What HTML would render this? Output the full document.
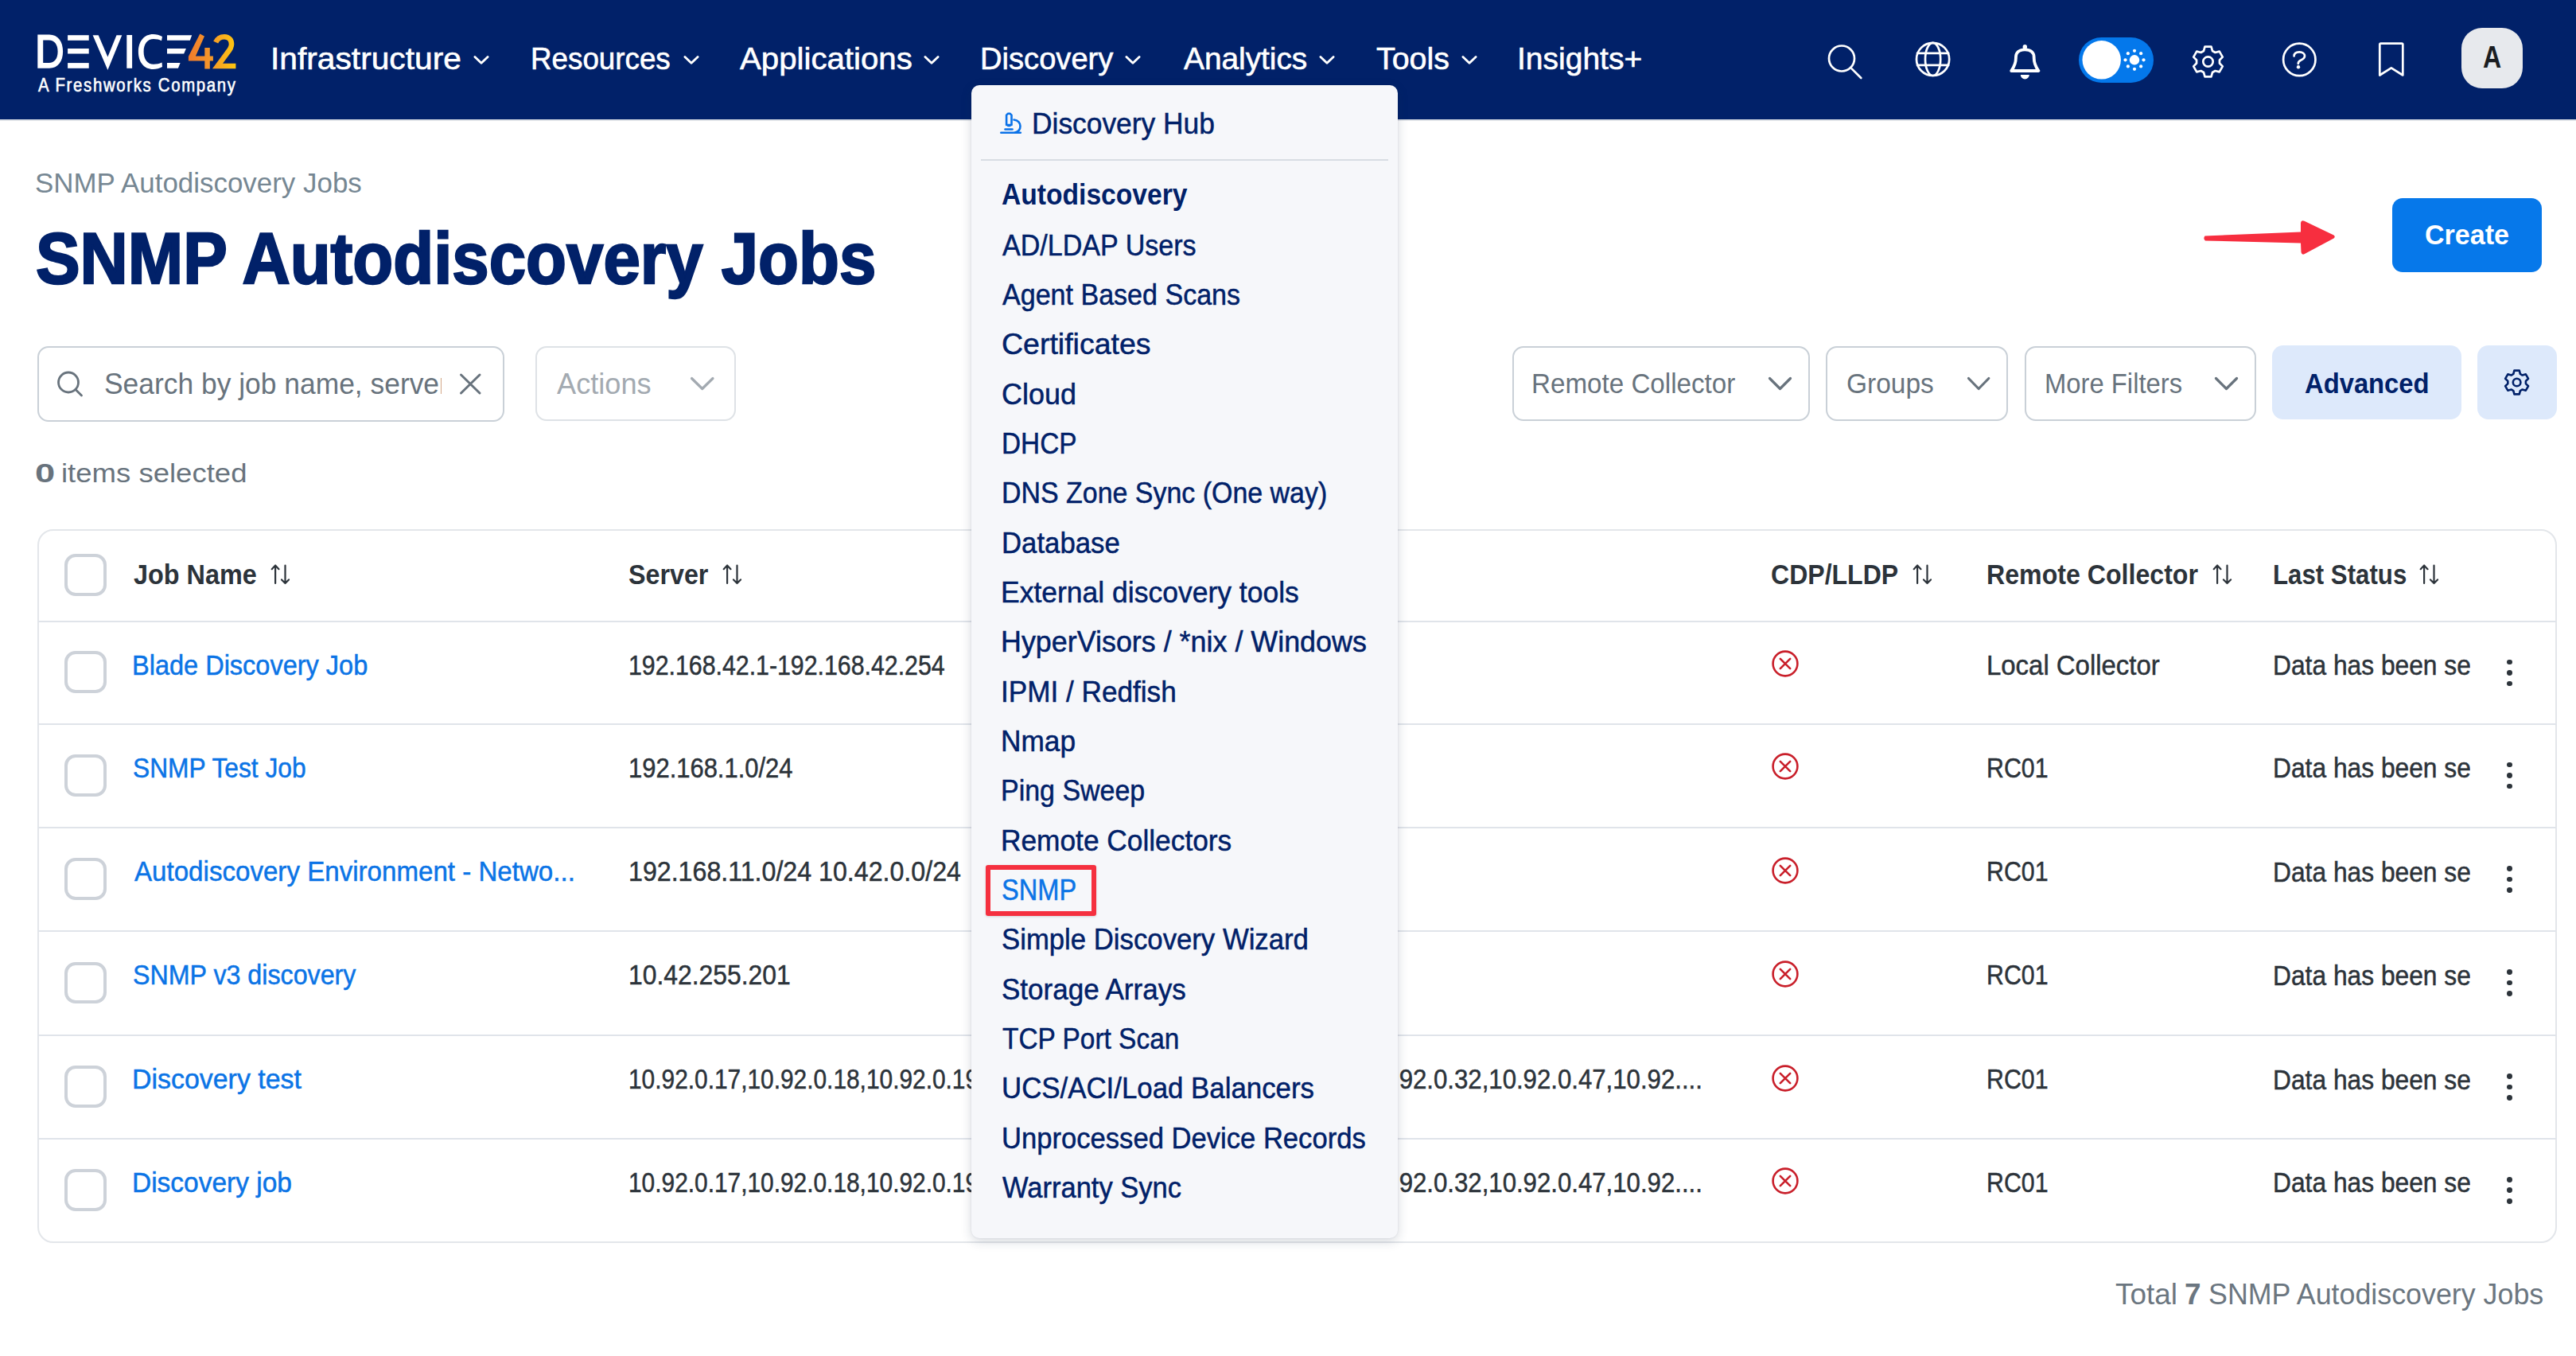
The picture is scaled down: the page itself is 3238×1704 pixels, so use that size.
<!DOCTYPE html>
<html><head><meta charset="utf-8"><style>
html,body{margin:0;padding:0;width:3238px;height:1704px;overflow:hidden;background:#fff;position:relative}
body{font-family:"Liberation Sans",sans-serif}
.t{position:absolute;line-height:0;white-space:nowrap;transform-origin:0 0}
svg{overflow:visible}
</style></head><body>
<div style="position:absolute;left:0px;top:0px;width:3238px;height:150px;background:#012169"></div>
<div style="position:absolute;left:0px;top:150px;width:3238px;height:2px;background:#e0e3e8"></div>
<svg style="position:absolute;left:0;top:0" width="320" height="130" viewBox="0 0 320 130">
<defs><linearGradient id="lg" x1="236" y1="0" x2="297" y2="0" gradientUnits="userSpaceOnUse"><stop offset="0" stop-color="#f07a2b"/><stop offset="0.45" stop-color="#f5962a"/><stop offset="1" stop-color="#fdc70f"/></linearGradient></defs>
<g fill="#fff">
<path fill-rule="evenodd" d="M47.3,43.4 H62 C73,43.4 79.1,52 79.1,64.6 C79.1,77.2 73,85.8 62,85.8 H47.3 Z M54.2,50.5 V79 H61.5 C68.5,79 72.6,73.5 72.6,64.7 C72.6,56 68.5,50.5 61.5,50.5 Z"/>
<rect x="85.1" y="44.2" width="26.6" height="6.6"/><rect x="85.1" y="61" width="26.6" height="6.5"/><rect x="85.1" y="79.1" width="26.6" height="6.7"/>
<path d="M116.6,44.2 H123.7 L135.4,71.4 L146.5,44.2 H153.3 L135.4,88 Z"/>
<rect x="159.3" y="44" width="6.8" height="41.8"/>
<path d="M204,46 C200.5,43.8 196.5,42.9 192.5,42.9 C181,42.9 173.9,52 173.9,64.9 C173.9,77.8 181,86.9 192.5,86.9 C196.5,86.9 200.5,86 204,84 L203.5,78.5 C200.5,80 197,80.7 193,80.7 C185.5,80.7 180.6,74.5 180.6,64.9 C180.6,55.3 185.5,49.1 193,49.1 C197,49.1 200.5,49.8 203,51.2 Z"/>
<path d="M210,44.2 H241.2 L238.8,50.8 H210 Z"/><path d="M210,61 H233.9 L231.2,67.5 H210 Z"/><path d="M210,79.1 H226.6 L223.9,85.8 H210 Z"/>
</g>
<path fill="url(#lg)" d="M251.3,42.6 L257,45.6 L245.9,70.6 H257.3 V60 H263.8 V70.6 H267.9 V76.6 H263.8 V86.6 H257.3 V76.6 H236.9 V71 Z"/>
<path fill="none" stroke="url(#lg)" stroke-width="6.6" d="M271.2,53.2 C273.5,48 277.5,46.2 282,46.2 C288,46.2 291,50.5 291,55.5 C291,59.5 289,62.5 286,66 L273.5,83 H296.4"/>
</svg>
<div class="t" style="left:48.00px;top:107px;font-size:23.69px;color:#fff;transform:scaleX(0.8600);-webkit-text-stroke:0.6px #fff;letter-spacing:1.941px;">A Freshworks Company</div>
<div class="t" style="left:339.63px;top:74px;font-size:38.37px;color:#fff;transform:scaleX(1.0614);-webkit-text-stroke:0.6px #fff;">Infrastructure</div>
<svg style="position:absolute;left:593.5px;top:68px" width="23" height="16" viewBox="0 0 23 16"><path d="M2.9,3.5 L11,11.3 L19.1,3.5" fill="none" stroke="#fff" stroke-width="2.9" stroke-linecap="round" stroke-linejoin="round"/></svg>
<div class="t" style="left:666.96px;top:74px;font-size:38.37px;color:#fff;transform:scaleX(0.9586);-webkit-text-stroke:0.6px #fff;">Resources</div>
<svg style="position:absolute;left:857.5px;top:68px" width="23" height="16" viewBox="0 0 23 16"><path d="M2.9,3.5 L11,11.3 L19.1,3.5" fill="none" stroke="#fff" stroke-width="2.9" stroke-linecap="round" stroke-linejoin="round"/></svg>
<div class="t" style="left:930.30px;top:74px;font-size:38.37px;color:#fff;transform:scaleX(1.0482);-webkit-text-stroke:0.6px #fff;">Applications</div>
<svg style="position:absolute;left:1160.1px;top:68px" width="23" height="16" viewBox="0 0 23 16"><path d="M2.9,3.5 L11,11.3 L19.1,3.5" fill="none" stroke="#fff" stroke-width="2.9" stroke-linecap="round" stroke-linejoin="round"/></svg>
<div class="t" style="left:1232.25px;top:74px;font-size:38.37px;color:#fff;transform:scaleX(0.9940);-webkit-text-stroke:0.6px #fff;">Discovery</div>
<svg style="position:absolute;left:1413.2px;top:68px" width="23" height="16" viewBox="0 0 23 16"><path d="M2.9,3.5 L11,11.3 L19.1,3.5" fill="none" stroke="#fff" stroke-width="2.9" stroke-linecap="round" stroke-linejoin="round"/></svg>
<div class="t" style="left:1487.80px;top:74px;font-size:38.37px;color:#fff;transform:scaleX(1.0115);-webkit-text-stroke:0.6px #fff;">Analytics</div>
<svg style="position:absolute;left:1656.8px;top:68px" width="23" height="16" viewBox="0 0 23 16"><path d="M2.9,3.5 L11,11.3 L19.1,3.5" fill="none" stroke="#fff" stroke-width="2.9" stroke-linecap="round" stroke-linejoin="round"/></svg>
<div class="t" style="left:1729.71px;top:74px;font-size:38.37px;color:#fff;transform:scaleX(1.0264);-webkit-text-stroke:0.6px #fff;">Tools</div>
<svg style="position:absolute;left:1835.6px;top:68px" width="23" height="16" viewBox="0 0 23 16"><path d="M2.9,3.5 L11,11.3 L19.1,3.5" fill="none" stroke="#fff" stroke-width="2.9" stroke-linecap="round" stroke-linejoin="round"/></svg>
<div class="t" style="left:1907.39px;top:74px;font-size:38.37px;color:#fff;transform:scaleX(1.0169);-webkit-text-stroke:0.6px #fff;">Insights+</div>
<svg style="position:absolute;left:2280px;top:40px" width="920" height="80" viewBox="2280 40 920 80">
<g fill="none" stroke="#fff" stroke-width="2.7" stroke-linecap="round" stroke-linejoin="round">
<circle cx="2315" cy="73.5" r="16"/><path d="M2327.6,86.4 L2339.3,98"/>
<circle cx="2429.6" cy="74.4" r="20.6"/><ellipse cx="2429.6" cy="74.4" rx="9.6" ry="20.6"/><path d="M2410,66.9 H2449.2 M2410,81.9 H2449.2"/>
<path stroke-width="3.8" d="M2528.2,89 C2531,85 2533.9,81 2533.9,73 L2533.9,72 C2533.9,65.5 2538.6,62.4 2545.3,62.4 C2552,62.4 2556.7,65.5 2556.7,72 L2556.7,73 C2556.7,81 2559.6,85 2562.4,89 Z"/>
<circle cx="2890.3" cy="74.9" r="20.2"/>
<path d="M2883.6,70.5 C2883.6,66.8 2886.6,65.3 2890.3,65.3 C2894.3,65.3 2897,67.6 2897,70.3 C2897,73.6 2894,74.8 2891.5,76 C2889.6,77 2888.8,78 2888.8,80"/>
<path d="M2991.3,56 Q2991.3,54.7 2992.6,54.7 H3019 Q3020.3,54.7 3020.3,56 V94.5 L3005.8,85.3 L2991.3,94.5 Z"/>
</g>
<g fill="#fff"><rect x="2542.6" y="56" width="5.4" height="6" rx="2.7"/><path d="M2539.8,93.9 H2550.8 A5.5,5.5 0 0 1 2539.8,93.9 Z"/><circle cx="2889" cy="84.3" r="2.2"/></g>
</svg>
<svg style="position:absolute;left:0;top:0" width="3238" height="150"><path d="M2770.03,63.96 L2771.51,58.72 L2779.49,58.72 L2780.97,63.96 L2784.49,66.00 L2789.77,64.65 L2793.76,71.57 L2789.96,75.47 L2789.96,79.53 L2793.76,83.43 L2789.77,90.35 L2784.49,89.00 L2780.97,91.04 L2779.49,96.28 L2771.51,96.28 L2770.03,91.04 L2766.51,89.00 L2761.23,90.35 L2757.24,83.43 L2761.04,79.53 L2761.04,75.47 L2757.24,71.57 L2761.23,64.65 L2766.51,66.00 Z" fill="none" stroke="#fff" stroke-width="2.7" stroke-linejoin="round"/><circle cx="2775.5" cy="77.5" r="6.2" fill="none" stroke="#fff" stroke-width="2.7"/></svg>
<div style="position:absolute;left:2613px;top:47.2px;width:94px;height:56.6px;background:#0478eb;border-radius:28.3px"></div>
<svg style="position:absolute;left:2600px;top:40px" width="120" height="70" viewBox="2600 40 120 70"><circle cx="2641.7" cy="75.3" r="24.2" fill="#fff"/>
<g fill="#fff"><circle cx="2683" cy="75.3" r="6.2"/><circle cx="2694.50" cy="75.30" r="2.1"/><circle cx="2691.13" cy="83.43" r="2.1"/><circle cx="2683.00" cy="86.80" r="2.1"/><circle cx="2674.87" cy="83.43" r="2.1"/><circle cx="2671.50" cy="75.30" r="2.1"/><circle cx="2674.87" cy="67.17" r="2.1"/><circle cx="2683.00" cy="63.80" r="2.1"/><circle cx="2691.13" cy="67.17" r="2.1"/></g></svg>
<div style="position:absolute;left:3093.7px;top:35px;width:77.3px;height:75.8px;background:#e7e9ed;border-radius:26px"></div>
<div class="t" style="left:3120.70px;top:71px;font-size:39.54px;color:#1b1d21;font-weight:700;transform:scaleX(0.8117);">A</div>
<div class="t" style="left:44.43px;top:230px;font-size:35.61px;color:#768793;transform:scaleX(0.9805);">SNMP Autodiscovery Jobs</div>
<div class="t" style="left:44.70px;top:325px;font-size:90.26px;color:#012169;font-weight:700;transform:scaleX(0.9238);-webkit-text-stroke:2.4px #012169;">SNMP Autodiscovery Jobs</div>
<div style="position:absolute;left:3007px;top:249px;width:187.7px;height:92.7px;background:#0678ea;border-radius:13px"></div>
<div class="t" style="left:3047.94px;top:295px;font-size:35.90px;color:#fff;font-weight:700;transform:scaleX(0.9490);">Create</div>
<svg style="position:absolute;left:2760px;top:265px" width="190" height="70" viewBox="2760 265 190 70" style="overflow:visible"><path d="M2771.5,296.5 Q2769,300 2772,302.5 L2892,305.5 L2892.5,317 Q2893.5,321 2897,319 L2933.5,299.5 Q2936,297.3 2933.5,295.5 L2896.5,277.8 Q2892.5,276 2892,280 L2892,291.5 Z" fill="#f72e3f"/></svg>
<div style="position:absolute;left:46.8px;top:435px;width:587px;height:95px;box-sizing:border-box;border:2px solid #c9d0d7;border-radius:14px;background:#fff"></div>
<svg style="position:absolute;left:60px;top:455px" width="60" height="55" viewBox="60 455 60 55"><g fill="none" stroke="#68737d" stroke-width="2.8" stroke-linecap="round"><circle cx="86" cy="480.5" r="12.5"/><path d="M95.5,490 L102.5,497"/></g></svg>
<div style="position:absolute;left:120px;top:440px;width:435px;height:80px;overflow:hidden">
<div class="t" style="left:11.41px;top:43px;font-size:36.34px;color:#68737d;transform:scaleX(0.9744)">Search by job name, server</div></div>
<svg style="position:absolute;left:570px;top:462px" width="42" height="40" viewBox="570 462 42 40"><path d="M579.5,471 L603,494 M603,471 L579.5,494" stroke="#68737d" stroke-width="3" stroke-linecap="round" fill="none"/></svg>
<div style="position:absolute;left:673px;top:435px;width:251.6px;height:94px;box-sizing:border-box;border:2px solid #dee2e6;border-radius:14px;background:#fff"></div>
<div class="t" style="left:700.00px;top:483px;font-size:36.34px;color:#a3aab1;transform:scaleX(0.9965);">Actions</div>
<svg style="position:absolute;left:863.5px;top:469.6px" width="37.5" height="24.0" viewBox="863.5 469.6 37.5 24.0"><path d="M869.0,475.1 L882.25,488.1 L895.5,475.1" fill="none" stroke="#a3aab1" stroke-width="3.2" stroke-linecap="round" stroke-linejoin="round"/></svg>
<div style="position:absolute;left:1900.6px;top:434.5px;width:374.5999999999999px;height:94px;box-sizing:border-box;border:2px solid #c9d0d7;border-radius:14px;background:#fff"></div>
<div class="t" style="left:1925.35px;top:482px;font-size:35.61px;color:#68737d;transform:scaleX(0.9317);">Remote Collector</div>
<svg style="position:absolute;left:2219px;top:470px" width="37" height="24" viewBox="2219 470 37 24"><path d="M2224.5,475.5 L2237.5,488.5 L2250.5,475.5" fill="none" stroke="#68737d" stroke-width="3.2" stroke-linecap="round" stroke-linejoin="round"/></svg>
<div style="position:absolute;left:2295px;top:434.5px;width:229px;height:94px;box-sizing:border-box;border:2px solid #c9d0d7;border-radius:14px;background:#fff"></div>
<div class="t" style="left:2321.33px;top:482px;font-size:35.61px;color:#68737d;transform:scaleX(0.9404);">Groups</div>
<svg style="position:absolute;left:2468.7px;top:470px" width="36.30000000000018" height="24" viewBox="2468.7 470 36.30000000000018 24"><path d="M2474.2,475.5 L2486.85,488.5 L2499.5,475.5" fill="none" stroke="#68737d" stroke-width="3.2" stroke-linecap="round" stroke-linejoin="round"/></svg>
<div style="position:absolute;left:2544.6px;top:434.5px;width:291.9000000000001px;height:94px;box-sizing:border-box;border:2px solid #c9d0d7;border-radius:14px;background:#fff"></div>
<div class="t" style="left:2569.98px;top:482px;font-size:35.61px;color:#68737d;transform:scaleX(0.9210);">More Filters</div>
<svg style="position:absolute;left:2780px;top:470px" width="37" height="24" viewBox="2780 470 37 24"><path d="M2785.5,475.5 L2798.5,488.5 L2811.5,475.5" fill="none" stroke="#68737d" stroke-width="3.2" stroke-linecap="round" stroke-linejoin="round"/></svg>
<div style="position:absolute;left:2856px;top:434.3px;width:238px;height:93px;background:#dde9fb;border-radius:14px"></div>
<div class="t" style="left:2897.18px;top:482px;font-size:35.90px;color:#012169;font-weight:700;transform:scaleX(0.9128);">Advanced</div>
<div style="position:absolute;left:3114px;top:434.3px;width:100px;height:93px;background:#dde9fb;border-radius:14px"></div>
<svg style="position:absolute;left:3130px;top:445px" width="70" height="70" viewBox="3130 445 70 70"><path d="M3159.33,469.93 L3160.44,465.63 L3166.76,465.63 L3167.87,469.93 L3170.62,471.52 L3174.90,470.33 L3178.06,475.80 L3174.89,478.91 L3174.89,482.09 L3178.06,485.20 L3174.90,490.67 L3170.62,489.48 L3167.87,491.07 L3166.76,495.37 L3160.44,495.37 L3159.33,491.07 L3156.58,489.48 L3152.30,490.67 L3149.14,485.20 L3152.31,482.09 L3152.31,478.91 L3149.14,475.80 L3152.30,470.33 L3156.58,471.52 Z" fill="none" stroke="#012169" stroke-width="2.6" stroke-linejoin="round"/><circle cx="3163.6" cy="480.5" r="4.8" fill="none" stroke="#012169" stroke-width="2.6"/></svg>
<div class="t" style="left:44.19px;top:595px;font-size:33.43px;color:#68737d;font-weight:700;transform:scaleX(1.3539);">0</div>
<div class="t" style="left:76.93px;top:595px;font-size:33.43px;color:#68737d;transform:scaleX(1.0928);">items selected</div>
<div style="position:absolute;left:47px;top:665px;width:3167px;height:896.5px;box-sizing:border-box;border:2px solid #e3e6ea;border-radius:20px;background:#fff"></div>
<div style="position:absolute;left:48px;top:779.6px;width:3165px;height:2px;background:#e0e4ea"></div>
<div style="position:absolute;left:48px;top:908.6px;width:3165px;height:2px;background:#e0e4ea"></div>
<div style="position:absolute;left:48px;top:1039.2px;width:3165px;height:2px;background:#e0e4ea"></div>
<div style="position:absolute;left:48px;top:1169.1000000000001px;width:3165px;height:2px;background:#e0e4ea"></div>
<div style="position:absolute;left:48px;top:1300.1000000000001px;width:3165px;height:2px;background:#e0e4ea"></div>
<div style="position:absolute;left:48px;top:1429.8000000000002px;width:3165px;height:2px;background:#e0e4ea"></div>
<div style="position:absolute;left:81.1px;top:696.1px;width:52.7px;height:52.6px;box-sizing:border-box;border:4px solid #cdd2d9;border-radius:14px;background:#fff"></div>
<div class="t" style="left:168.01px;top:722px;font-size:34.88px;color:#2c333a;font-weight:700;transform:scaleX(0.9291);">Job Name</div>
<svg style="position:absolute;left:338.6px;top:706px" width="26" height="32" viewBox="338.6 706 26 32"><g fill="none" stroke="#2c333a" stroke-width="2.2" stroke-linecap="round" stroke-linejoin="round"><path d="M345.70000000000005,733 V710.6 M341.3,715.2 L345.70000000000005,710.6 L350.1,715.2"/><path d="M358.1,710.6 V733 M353.6,728.4 L358.1,733 L362.6,728.4"/></g></svg>
<div class="t" style="left:790.33px;top:722px;font-size:34.88px;color:#2c333a;font-weight:700;transform:scaleX(0.9244);">Server</div>
<svg style="position:absolute;left:907px;top:706px" width="26" height="32" viewBox="907 706 26 32"><g fill="none" stroke="#2c333a" stroke-width="2.2" stroke-linecap="round" stroke-linejoin="round"><path d="M914.1,733 V710.6 M909.7,715.2 L914.1,710.6 L918.5,715.2"/><path d="M926.5,710.6 V733 M922,728.4 L926.5,733 L931,728.4"/></g></svg>
<div class="t" style="left:2225.72px;top:722px;font-size:34.88px;color:#2c333a;font-weight:700;transform:scaleX(0.9187);">CDP/LLDP</div>
<svg style="position:absolute;left:2403px;top:706px" width="26" height="32" viewBox="2403 706 26 32"><g fill="none" stroke="#2c333a" stroke-width="2.2" stroke-linecap="round" stroke-linejoin="round"><path d="M2410.1,733 V710.6 M2405.7,715.2 L2410.1,710.6 L2414.5,715.2"/><path d="M2422.5,710.6 V733 M2418,728.4 L2422.5,733 L2427,728.4"/></g></svg>
<div class="t" style="left:2497.41px;top:722px;font-size:34.88px;color:#2c333a;font-weight:700;transform:scaleX(0.9212);">Remote Collector</div>
<svg style="position:absolute;left:2779.6px;top:706px" width="26" height="32" viewBox="2779.6 706 26 32"><g fill="none" stroke="#2c333a" stroke-width="2.2" stroke-linecap="round" stroke-linejoin="round"><path d="M2786.7,733 V710.6 M2782.2999999999997,715.2 L2786.7,710.6 L2791.1,715.2"/><path d="M2799.1,710.6 V733 M2794.6,728.4 L2799.1,733 L2803.6,728.4"/></g></svg>
<div class="t" style="left:2856.77px;top:722px;font-size:34.88px;color:#2c333a;font-weight:700;transform:scaleX(0.8950);">Last Status</div>
<svg style="position:absolute;left:3040.4px;top:706px" width="26" height="32" viewBox="3040.4 706 26 32"><g fill="none" stroke="#2c333a" stroke-width="2.2" stroke-linecap="round" stroke-linejoin="round"><path d="M3047.5,733 V710.6 M3043.1,715.2 L3047.5,710.6 L3051.9,715.2"/><path d="M3059.9,710.6 V733 M3055.4,728.4 L3059.9,733 L3064.4,728.4"/></g></svg>
<div style="position:absolute;left:81.1px;top:818.4000000000001px;width:52.7px;height:52.6px;box-sizing:border-box;border:4px solid #cdd2d9;border-radius:14px;background:#fff"></div>
<div class="t" style="left:165.90px;top:836px;font-size:34.59px;color:#0b74e6;transform:scaleX(0.9400);-webkit-text-stroke:0.5px #0b74e6">Blade Discovery Job</div>
<div class="t" style="left:790.33px;top:836px;font-size:34.30px;color:#2c333a;transform:scaleX(0.8834);-webkit-text-stroke:0.5px #2c333a">192.168.42.1-192.168.42.254</div>
<svg style="position:absolute;left:2222px;top:812.2px" width="44" height="44" viewBox="-22 -22 44 44"><circle r="15.4" fill="none" stroke="#c91f2a" stroke-width="2.6"/><path d="M-6.2,-6.2 L6.2,6.2 M6.2,-6.2 L-6.2,6.2" stroke="#c91f2a" stroke-width="2.6" stroke-linecap="round"/></svg>
<div class="t" style="left:2497.07px;top:836px;font-size:35.61px;color:#2c333a;transform:scaleX(0.9245);-webkit-text-stroke:0.5px #2c333a">Local Collector</div>
<div style="position:absolute;left:2840px;top:800.2px;width:265px;height:80px;overflow:hidden">
<div class="t" style="left:16.76px;top:36px;font-size:34.88px;color:#2c333a;transform:scaleX(0.9103);-webkit-text-stroke:0.5px #2c333a">Data has been sent</div></div>
<div style="position:absolute;left:3151.2px;top:828.6px;width:6.8px;height:6.8px;background:#2c333a;border-radius:50%"></div>
<div style="position:absolute;left:3151.2px;top:842.1px;width:6.8px;height:6.8px;background:#2c333a;border-radius:50%"></div>
<div style="position:absolute;left:3151.2px;top:855.6px;width:6.8px;height:6.8px;background:#2c333a;border-radius:50%"></div>
<div style="position:absolute;left:81.1px;top:948.2px;width:52.7px;height:52.6px;box-sizing:border-box;border:4px solid #cdd2d9;border-radius:14px;background:#fff"></div>
<div class="t" style="left:167.07px;top:965px;font-size:34.59px;color:#0b74e6;transform:scaleX(0.9180);-webkit-text-stroke:0.5px #0b74e6">SNMP Test Job</div>
<div class="t" style="left:790.28px;top:965px;font-size:34.30px;color:#2c333a;transform:scaleX(0.9023);-webkit-text-stroke:0.5px #2c333a">192.168.1.0/24</div>
<svg style="position:absolute;left:2222px;top:941.2px" width="44" height="44" viewBox="-22 -22 44 44"><circle r="15.4" fill="none" stroke="#c91f2a" stroke-width="2.6"/><path d="M-6.2,-6.2 L6.2,6.2 M6.2,-6.2 L-6.2,6.2" stroke="#c91f2a" stroke-width="2.6" stroke-linecap="round"/></svg>
<div class="t" style="left:2497.27px;top:965px;font-size:35.61px;color:#2c333a;transform:scaleX(0.8517);-webkit-text-stroke:0.5px #2c333a">RC01</div>
<div style="position:absolute;left:2840px;top:929.2px;width:265px;height:80px;overflow:hidden">
<div class="t" style="left:16.76px;top:36px;font-size:34.88px;color:#2c333a;transform:scaleX(0.9103);-webkit-text-stroke:0.5px #2c333a">Data has been sent</div></div>
<div style="position:absolute;left:3151.2px;top:957.6px;width:6.8px;height:6.8px;background:#2c333a;border-radius:50%"></div>
<div style="position:absolute;left:3151.2px;top:971.1px;width:6.8px;height:6.8px;background:#2c333a;border-radius:50%"></div>
<div style="position:absolute;left:3151.2px;top:984.6px;width:6.8px;height:6.8px;background:#2c333a;border-radius:50%"></div>
<div style="position:absolute;left:81.1px;top:1078.45px;width:52.7px;height:52.6px;box-sizing:border-box;border:4px solid #cdd2d9;border-radius:14px;background:#fff"></div>
<div class="t" style="left:168.50px;top:1095px;font-size:34.59px;color:#0b74e6;transform:scaleX(0.9575);-webkit-text-stroke:0.5px #0b74e6">Autodiscovery Environment - Netwo...</div>
<div class="t" style="left:790.19px;top:1095px;font-size:34.30px;color:#2c333a;transform:scaleX(0.9378);-webkit-text-stroke:0.5px #2c333a">192.168.11.0/24 10.42.0.0/24</div>
<svg style="position:absolute;left:2222px;top:1071.8px" width="44" height="44" viewBox="-22 -22 44 44"><circle r="15.4" fill="none" stroke="#c91f2a" stroke-width="2.6"/><path d="M-6.2,-6.2 L6.2,6.2 M6.2,-6.2 L-6.2,6.2" stroke="#c91f2a" stroke-width="2.6" stroke-linecap="round"/></svg>
<div class="t" style="left:2497.27px;top:1095px;font-size:35.61px;color:#2c333a;transform:scaleX(0.8517);-webkit-text-stroke:0.5px #2c333a">RC01</div>
<div style="position:absolute;left:2840px;top:1059.8px;width:265px;height:80px;overflow:hidden">
<div class="t" style="left:16.76px;top:36px;font-size:34.88px;color:#2c333a;transform:scaleX(0.9103);-webkit-text-stroke:0.5px #2c333a">Data has been sent</div></div>
<div style="position:absolute;left:3151.2px;top:1088.1999999999998px;width:6.8px;height:6.8px;background:#2c333a;border-radius:50%"></div>
<div style="position:absolute;left:3151.2px;top:1101.6999999999998px;width:6.8px;height:6.8px;background:#2c333a;border-radius:50%"></div>
<div style="position:absolute;left:3151.2px;top:1115.1999999999998px;width:6.8px;height:6.8px;background:#2c333a;border-radius:50%"></div>
<div style="position:absolute;left:81.1px;top:1208.9px;width:52.7px;height:52.6px;box-sizing:border-box;border:4px solid #cdd2d9;border-radius:14px;background:#fff"></div>
<div class="t" style="left:167.05px;top:1225px;font-size:34.59px;color:#0b74e6;transform:scaleX(0.9313);-webkit-text-stroke:0.5px #0b74e6">SNMP v3 discovery</div>
<div class="t" style="left:790.21px;top:1225px;font-size:34.30px;color:#2c333a;transform:scaleX(0.9291);-webkit-text-stroke:0.5px #2c333a">10.42.255.201</div>
<svg style="position:absolute;left:2222px;top:1201.7px" width="44" height="44" viewBox="-22 -22 44 44"><circle r="15.4" fill="none" stroke="#c91f2a" stroke-width="2.6"/><path d="M-6.2,-6.2 L6.2,6.2 M6.2,-6.2 L-6.2,6.2" stroke="#c91f2a" stroke-width="2.6" stroke-linecap="round"/></svg>
<div class="t" style="left:2497.27px;top:1225px;font-size:35.61px;color:#2c333a;transform:scaleX(0.8517);-webkit-text-stroke:0.5px #2c333a">RC01</div>
<div style="position:absolute;left:2840px;top:1189.7px;width:265px;height:80px;overflow:hidden">
<div class="t" style="left:16.76px;top:36px;font-size:34.88px;color:#2c333a;transform:scaleX(0.9103);-webkit-text-stroke:0.5px #2c333a">Data has been sent</div></div>
<div style="position:absolute;left:3151.2px;top:1218.1px;width:6.8px;height:6.8px;background:#2c333a;border-radius:50%"></div>
<div style="position:absolute;left:3151.2px;top:1231.6px;width:6.8px;height:6.8px;background:#2c333a;border-radius:50%"></div>
<div style="position:absolute;left:3151.2px;top:1245.1px;width:6.8px;height:6.8px;background:#2c333a;border-radius:50%"></div>
<div style="position:absolute;left:81.1px;top:1339.2500000000002px;width:52.7px;height:52.6px;box-sizing:border-box;border:4px solid #cdd2d9;border-radius:14px;background:#fff"></div>
<div class="t" style="left:165.79px;top:1356px;font-size:34.59px;color:#0b74e6;transform:scaleX(0.9807);-webkit-text-stroke:0.5px #0b74e6">Discovery test</div>
<div class="t" style="left:790.36px;top:1356px;font-size:34.30px;color:#2c333a;transform:scaleX(0.8708);-webkit-text-stroke:0.5px #2c333a">10.92.0.17,10.92.0.18,10.92.0.19,10.92.0.20</div>
<div class="t" style="left:1750.27px;top:1356px;font-size:34.30px;color:#2c333a;transform:scaleX(0.9087);-webkit-text-stroke:0.5px #2c333a">.92.0.32,10.92.0.47,10.92....</div>
<svg style="position:absolute;left:2222px;top:1332.7px" width="44" height="44" viewBox="-22 -22 44 44"><circle r="15.4" fill="none" stroke="#c91f2a" stroke-width="2.6"/><path d="M-6.2,-6.2 L6.2,6.2 M6.2,-6.2 L-6.2,6.2" stroke="#c91f2a" stroke-width="2.6" stroke-linecap="round"/></svg>
<div class="t" style="left:2497.27px;top:1356px;font-size:35.61px;color:#2c333a;transform:scaleX(0.8517);-webkit-text-stroke:0.5px #2c333a">RC01</div>
<div style="position:absolute;left:2840px;top:1320.7px;width:265px;height:80px;overflow:hidden">
<div class="t" style="left:16.76px;top:36px;font-size:34.88px;color:#2c333a;transform:scaleX(0.9103);-webkit-text-stroke:0.5px #2c333a">Data has been sent</div></div>
<div style="position:absolute;left:3151.2px;top:1349.1px;width:6.8px;height:6.8px;background:#2c333a;border-radius:50%"></div>
<div style="position:absolute;left:3151.2px;top:1362.6px;width:6.8px;height:6.8px;background:#2c333a;border-radius:50%"></div>
<div style="position:absolute;left:3151.2px;top:1376.1px;width:6.8px;height:6.8px;background:#2c333a;border-radius:50%"></div>
<div style="position:absolute;left:81.1px;top:1469.4px;width:52.7px;height:52.6px;box-sizing:border-box;border:4px solid #cdd2d9;border-radius:14px;background:#fff"></div>
<div class="t" style="left:165.82px;top:1486px;font-size:34.59px;color:#0b74e6;transform:scaleX(0.9685);-webkit-text-stroke:0.5px #0b74e6">Discovery job</div>
<div class="t" style="left:790.36px;top:1486px;font-size:34.30px;color:#2c333a;transform:scaleX(0.8708);-webkit-text-stroke:0.5px #2c333a">10.92.0.17,10.92.0.18,10.92.0.19,10.92.0.20</div>
<div class="t" style="left:1750.27px;top:1486px;font-size:34.30px;color:#2c333a;transform:scaleX(0.9087);-webkit-text-stroke:0.5px #2c333a">.92.0.32,10.92.0.47,10.92....</div>
<svg style="position:absolute;left:2222px;top:1462.4px" width="44" height="44" viewBox="-22 -22 44 44"><circle r="15.4" fill="none" stroke="#c91f2a" stroke-width="2.6"/><path d="M-6.2,-6.2 L6.2,6.2 M6.2,-6.2 L-6.2,6.2" stroke="#c91f2a" stroke-width="2.6" stroke-linecap="round"/></svg>
<div class="t" style="left:2497.27px;top:1486px;font-size:35.61px;color:#2c333a;transform:scaleX(0.8517);-webkit-text-stroke:0.5px #2c333a">RC01</div>
<div style="position:absolute;left:2840px;top:1450.4px;width:265px;height:80px;overflow:hidden">
<div class="t" style="left:16.76px;top:36px;font-size:34.88px;color:#2c333a;transform:scaleX(0.9103);-webkit-text-stroke:0.5px #2c333a">Data has been sent</div></div>
<div style="position:absolute;left:3151.2px;top:1478.8px;width:6.8px;height:6.8px;background:#2c333a;border-radius:50%"></div>
<div style="position:absolute;left:3151.2px;top:1492.3px;width:6.8px;height:6.8px;background:#2c333a;border-radius:50%"></div>
<div style="position:absolute;left:3151.2px;top:1505.8px;width:6.8px;height:6.8px;background:#2c333a;border-radius:50%"></div>
<div class="t" style="left:2659.46px;top:1627px;font-size:36.34px;color:#6b7680;transform:scaleX(1.0165);">Total</div>
<div class="t" style="left:2746.32px;top:1627px;font-size:36.34px;color:#6b7680;font-weight:700;transform:scaleX(1.0197);">7</div>
<div class="t" style="left:2776.19px;top:1627px;font-size:36.34px;color:#6b7680;transform:scaleX(0.9856);">SNMP Autodiscovery Jobs</div>
<div style="position:absolute;left:1220.8px;top:107px;width:536.2px;height:1448.5px;background:#f6f7fa;border-radius:10px;box-shadow:0 4px 14px rgba(30,45,70,0.18),0 0 2px rgba(30,45,70,0.12)"></div>
<svg style="position:absolute;left:1250px;top:135px" width="40" height="40" viewBox="1250 135 40 40"><g fill="none" stroke="#0a72e8" stroke-width="2.6" stroke-linecap="round" stroke-linejoin="round">
<path d="M1265.1,144.6 L1266.9,142.8 H1269.7 L1271.5,144.6 V157 H1265.1 Z"/><path d="M1274.5,150.5 C1280,151 1282.5,155 1282.5,158.5 C1282.5,162.5 1280,165.5 1276,166.5"/><path d="M1263.5,162.5 H1272.5"/><path stroke-width="2" d="M1267,158.2 H1269.6"/><path d="M1258.3,166.8 H1282.8"/></g></svg>
<div class="t" style="left:1297.47px;top:156px;font-size:36.34px;color:#012169;transform:scaleX(0.9735);-webkit-text-stroke:0.5px #012169">Discovery Hub</div>
<div style="position:absolute;left:1233px;top:200px;width:512px;height:2px;background:#d8dde3"></div>
<div class="t" style="left:1258.66px;top:245px;font-size:36.34px;color:#012169;font-weight:700;transform:scaleX(0.9253);">Autodiscovery</div>
<div class="t" style="left:1259.50px;top:309px;font-size:36.34px;color:#012169;transform:scaleX(0.9379);-webkit-text-stroke:0.5px #012169">AD/LDAP Users</div>
<div class="t" style="left:1259.50px;top:371px;font-size:36.34px;color:#012169;transform:scaleX(0.9372);-webkit-text-stroke:0.5px #012169">Agent Based Scans</div>
<div class="t" style="left:1258.73px;top:433px;font-size:36.34px;color:#012169;transform:scaleX(1.0319);-webkit-text-stroke:0.5px #012169">Certificates</div>
<div class="t" style="left:1258.80px;top:496px;font-size:36.34px;color:#012169;transform:scaleX(0.9894);-webkit-text-stroke:0.5px #012169">Cloud</div>
<div class="t" style="left:1258.93px;top:558px;font-size:36.34px;color:#012169;transform:scaleX(0.9183);-webkit-text-stroke:0.5px #012169">DHCP</div>
<div class="t" style="left:1258.88px;top:620px;font-size:36.34px;color:#012169;transform:scaleX(0.9340);-webkit-text-stroke:0.5px #012169">DNS Zone Sync (One way)</div>
<div class="t" style="left:1258.82px;top:683px;font-size:36.34px;color:#012169;transform:scaleX(0.9564);-webkit-text-stroke:0.5px #012169">Database</div>
<div class="t" style="left:1258.36px;top:745px;font-size:36.34px;color:#012169;transform:scaleX(0.9769);-webkit-text-stroke:0.5px #012169">External discovery tools</div>
<div class="t" style="left:1258.33px;top:807px;font-size:36.34px;color:#012169;transform:scaleX(0.9875);-webkit-text-stroke:0.5px #012169">HyperVisors / *nix / Windows</div>
<div class="t" style="left:1258.04px;top:870px;font-size:36.34px;color:#012169;transform:scaleX(0.9673);-webkit-text-stroke:0.5px #012169">IPMI / Redfish</div>
<div class="t" style="left:1258.38px;top:932px;font-size:36.34px;color:#012169;transform:scaleX(0.9710);-webkit-text-stroke:0.5px #012169">Nmap</div>
<div class="t" style="left:1258.48px;top:994px;font-size:36.34px;color:#012169;transform:scaleX(0.9346);-webkit-text-stroke:0.5px #012169">Ping Sweep</div>
<div class="t" style="left:1258.38px;top:1057px;font-size:36.34px;color:#012169;transform:scaleX(0.9712);-webkit-text-stroke:0.5px #012169">Remote Collectors</div>
<div class="t" style="left:1258.93px;top:1119px;font-size:36.34px;color:#0b74e6;transform:scaleX(0.8966);-webkit-text-stroke:0.5px #0b74e6">SNMP</div>
<div class="t" style="left:1258.84px;top:1181px;font-size:36.34px;color:#012169;transform:scaleX(0.9559);-webkit-text-stroke:0.5px #012169">Simple Discovery Wizard</div>
<div class="t" style="left:1258.82px;top:1244px;font-size:36.34px;color:#012169;transform:scaleX(0.9643);-webkit-text-stroke:0.5px #012169">Storage Arrays</div>
<div class="t" style="left:1259.83px;top:1306px;font-size:36.34px;color:#012169;transform:scaleX(0.9201);-webkit-text-stroke:0.5px #012169">TCP Port Scan</div>
<div class="t" style="left:1258.89px;top:1368px;font-size:36.34px;color:#012169;transform:scaleX(0.9587);-webkit-text-stroke:0.5px #012169">UCS/ACI/Load Balancers</div>
<div class="t" style="left:1258.90px;top:1431px;font-size:36.34px;color:#012169;transform:scaleX(0.9525);-webkit-text-stroke:0.5px #012169">Unprocessed Device Records</div>
<div class="t" style="left:1259.83px;top:1493px;font-size:36.34px;color:#012169;transform:scaleX(0.9498);-webkit-text-stroke:0.5px #012169">Warranty Sync</div>
<div style="position:absolute;left:1239.4px;top:1087.2px;width:138.5px;height:63.5px;box-sizing:border-box;border:6px solid #f5303f;border-radius:3px;box-shadow:0 1px 3px rgba(0,0,0,0.15)"></div>
</body></html>
